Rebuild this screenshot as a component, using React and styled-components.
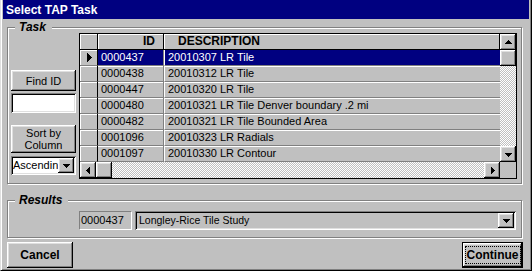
import React from 'react';
import styled, { createGlobalStyle, css } from 'styled-components';

const GlobalStyle = createGlobalStyle`
  body {
    margin: 0;
    background: #c0c0c0;
    font-family: "Liberation Sans", Arial, sans-serif;
    font-size: 11px;
    color: #000;
  }
`;

const raised = css`
  box-shadow: inset -1px -1px #000, inset 1px 1px #fff, inset -2px -2px #808080, inset 2px 2px #dfdfdf;
`;

const sunken = css`
  box-shadow: inset 1px 1px #808080, inset -1px -1px #fff, inset 2px 2px #000, inset -2px -2px #dfdfdf;
`;

const dither = css`
  background: repeating-conic-gradient(#c0c0c0 0 25%, #fff 0 50%) 0 0 / 2px 2px;
`;

const rows = [
  ['0000437', '20010307 LR Tile'],
  ['0000438', '20010312 LR Tile'],
  ['0000447', '20010320 LR Tile'],
  ['0000480', '20010321 LR Tile Denver boundary .2 mi'],
  ['0000482', '20010321 LR Tile Bounded Area'],
  ['0001096', '20010323 LR Radials'],
  ['0001097', '20010330 LR Contour'],
];

const rotations = { down: 0, up: 180, left: 90, right: -90 };

function Arrow({ dir = 'down' }) {
  return (
    <svg width="7" height="7" viewBox="0 0 7 7" shapeRendering="crispEdges"
      style={{ transform: `rotate(${rotations[dir]}deg)` }}>
      <path d="M0 2h7v1h-1v1h-1v1h-1v1h-1v-1h-1v-1h-1v-1h-1z" fill="#000" />
    </svg>
  );
}

function RowMarker() {
  return (
    <svg width="5" height="9" viewBox="0 0 5 9" shapeRendering="crispEdges">
      <path d="M0 0h1v1h1v1h1v1h1v1h1v1h-1v1h-1v1h-1v1h-1v1h-1z" fill="#000" />
    </svg>
  );
}

export default function App() {
  return (
    <>
      <GlobalStyle />
      <Window>
        <TitleBar>Select TAP Task</TitleBar>

        <TaskGroup>
          <Legend>Task</Legend>
          <LeftColumn>
            <Button $w="65px" $h="21px" $mt="37px">Find ID</Button>
            <TextField $mt="2px" />
            <Button $w="65px" $h="28px" $mt="12px">Sort by<br />Column</Button>
            <Combo $w="65px" $mt="3px" $white>
              <ComboText>Ascending</ComboText>
              <DropButton><Arrow dir="down" /></DropButton>
            </Combo>
          </LeftColumn>

          <Grid>
            <GridTop>
              <Table>
                <HeadCell />
                <HeadCell $right>ID</HeadCell>
                <HeadCell $pl="14px">DESCRIPTION</HeadCell>
                {rows.map(([id, desc], i) => (
                  <React.Fragment key={id}>
                    <MarkerCell>{i === 0 && <RowMarker />}</MarkerCell>
                    <IdCell $selected={i === 0}>{id}</IdCell>
                    <DescCell $selected={i === 0}>{desc}</DescCell>
                  </React.Fragment>
                ))}
              </Table>
              <VScroll>
                <ScrollButton><Arrow dir="up" /></ScrollButton>
                <ScrollButton />
                <Track />
                <ScrollButton><Arrow dir="down" /></ScrollButton>
              </VScroll>
            </GridTop>
            <HScroll>
              <ScrollButton><Arrow dir="left" /></ScrollButton>
              <ScrollButton />
              <Track />
              <ScrollButton><Arrow dir="right" /></ScrollButton>
              <Corner />
            </HScroll>
          </Grid>
        </TaskGroup>

        <ResultsGroup>
          <Legend>Results</Legend>
          <IdBox>0000437</IdBox>
          <Combo $w="381px">
            <ComboText $small>Longley-Rice Tile Study</ComboText>
            <DropButton><Arrow dir="down" /></DropButton>
          </Combo>
        </ResultsGroup>

        <ButtonRow>
          <Button $w="66px" $h="26px" $bold>Cancel</Button>
          <DefaultButton>
            <Button $w="59px" $h="24px" $bold>
              <Focus>Continue</Focus>
            </Button>
          </DefaultButton>
        </ButtonRow>
      </Window>
    </>
  );
}

const Window = styled.div`
  width: 532px;
  height: 271px;
  box-sizing: border-box;
  background: #c0c0c0;
  border-left: 1px solid #dfdfdf;
  border-right: 1px solid #000;
  border-bottom: 1px solid #000;
  box-shadow: inset 1px 0 #fff, inset -1px -1px #808080;
  padding: 0 2px 2px 2px;
  display: flex;
  flex-direction: column;
`;

const TitleBar = styled.div`
  height: 19px;
  flex-shrink: 0;
  background: #000080;
  color: #fff;
  font-weight: bold;
  font-size: 12px;
  padding-left: 3px;
  display: flex;
  align-items: center;
`;

const groupBox = css`
  position: relative;
  border: 1px solid #808080;
  box-shadow: 1px 1px 0 #fff, inset 1px 1px 0 #fff;
  margin-left: 4px;
  margin-right: 7px;
`;

const TaskGroup = styled.div`
  ${groupBox};
  margin-top: 8px;
  display: flex;
  gap: 3px;
  padding: 5px 4px 4px 3px;
`;

const ResultsGroup = styled.div`
  ${groupBox};
  margin-top: 16px;
  height: 32px;
  display: flex;
  align-items: flex-start;
  gap: 3px;
  padding: 10px 0 0 71px;
`;

const Legend = styled.div`
  position: absolute;
  top: -8px;
  left: 7px;
  padding: 0 6px 0 4px;
  background: #c0c0c0;
  font-size: 12px;
  font-weight: bold;
  font-style: italic;
  line-height: 14px;
`;

const LeftColumn = styled.div`
  width: 65px;
  display: flex;
  flex-direction: column;
`;

const Button = styled.div`
  width: ${p => p.$w};
  height: ${p => p.$h};
  margin-top: ${p => p.$mt || 0};
  box-sizing: border-box;
  background: #c0c0c0;
  ${raised};
  display: flex;
  align-items: center;
  justify-content: center;
  text-align: center;
  font-size: ${p => (p.$bold ? '12px' : '11px')};
  font-weight: ${p => (p.$bold ? 'bold' : 'normal')};
  line-height: 12px;
`;

const DefaultButton = styled.div`
  border: 1px solid #000;
`;

const Focus = styled.span`
  border: 1px dotted #000;
  padding: 1px 1px;
  line-height: 14px;
`;

const TextField = styled.div`
  height: 20px;
  margin-top: ${p => p.$mt};
  background: #fff;
  ${sunken};
`;

const Combo = styled.div`
  width: ${p => p.$w};
  height: ${p => p.$h || '19px'};
  margin-top: ${p => p.$mt || 0};
  box-sizing: border-box;
  padding: 2px;
  background: ${p => (p.$white ? '#fff' : '#c0c0c0')};
  ${sunken};
  display: flex;
  align-items: stretch;
  overflow: hidden;
`;

const ComboText = styled.div`
  flex: 1;
  overflow: hidden;
  white-space: nowrap;
  padding-left: ${p => (p.$small ? '2px' : '0')};
  font-size: ${p => (p.$small ? '10.5px' : '11px')};
  line-height: 15px;
`;

const DropButton = styled.div`
  width: 16px;
  flex-shrink: 0;
  background: #c0c0c0;
  ${raised};
  display: flex;
  align-items: center;
  justify-content: center;
`;

const Grid = styled.div`
  width: 438px;
  height: 146px;
  box-sizing: border-box;
  border: 1px solid #000;
  display: flex;
  flex-direction: column;
`;

const GridTop = styled.div`
  display: flex;
  height: 128px;
`;

const Table = styled.div`
  width: 420px;
  display: grid;
  grid-template-columns: 18px 66px 336px;
  grid-auto-rows: 16px;
  background: #c0c0c0;
`;

const cell = css`
  box-sizing: border-box;
  white-space: nowrap;
  overflow: hidden;
  line-height: 14px;
`;

const HeadCell = styled.div`
  ${cell};
  font-size: 12px;
  font-weight: bold;
  border-right: 1px solid #000;
  border-bottom: 1px solid #000;
  box-shadow: inset 1px 1px #fff;
  text-align: ${p => (p.$right ? 'right' : 'left')};
  padding-right: ${p => (p.$right ? '8px' : 0)};
  padding-left: ${p => p.$pl || 0};
  &:last-child { border-right: none; }
`;

const MarkerCell = styled.div`
  ${cell};
  border-right: 1px solid #000;
  border-bottom: 1px solid #808080;
  box-shadow: inset 1px 1px #fff;
  display: flex;
  align-items: center;
  padding-left: 7px;
`;

const DataCell = styled.div`
  ${cell};
  padding-left: 3px;
  border-bottom: 1px solid #808080;
  background: ${p => (p.$selected ? '#000080' : '#c0c0c0')};
  color: ${p => (p.$selected ? '#fff' : '#000')};
  box-shadow: ${p => (p.$selected ? 'none' : 'inset 0 1px #fff')};
`;

const IdCell = styled(DataCell)`
  border-right: 1px solid #808080;
`;

const DescCell = styled(DataCell)`
  border-left: 1px solid #fff;
`;

const VScroll = styled.div`
  width: 16px;
  display: flex;
  flex-direction: column;
`;

const HScroll = styled.div`
  height: 16px;
  display: flex;
`;

const ScrollButton = styled.div`
  width: 16px;
  height: 16px;
  flex-shrink: 0;
  box-sizing: border-box;
  background: #c0c0c0;
  ${raised};
  display: flex;
  align-items: center;
  justify-content: center;
`;

const Track = styled.div`
  flex: 1;
  ${dither};
`;

const Corner = styled.div`
  width: 16px;
  background: #c0c0c0;
`;

const IdBox = styled.div`
  width: 53px;
  height: 19px;
  box-sizing: border-box;
  border: 1px solid;
  border-color: #808080 #fff #fff #808080;
  padding-left: 1px;
  font-size: 11px;
  line-height: 17px;
`;

const ButtonRow = styled.div`
  margin: 4px 6px 0 4px;
  display: flex;
  justify-content: space-between;
  align-items: flex-start;
`;
